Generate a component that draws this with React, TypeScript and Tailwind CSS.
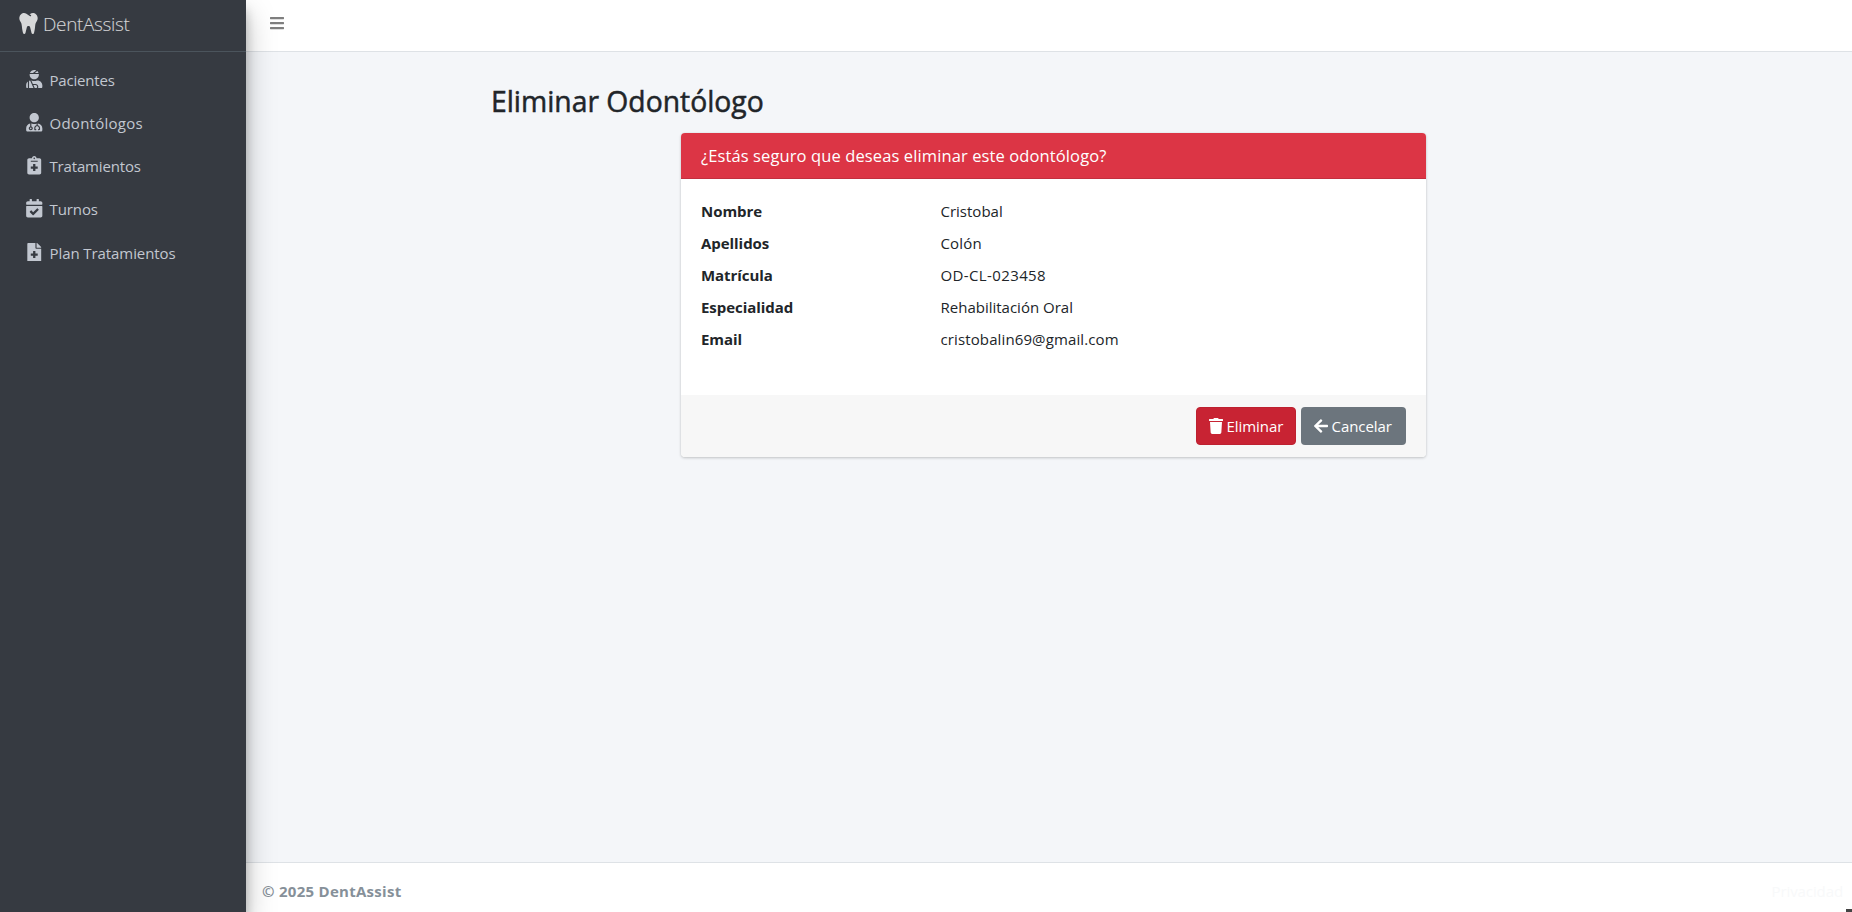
import type { ReactNode } from "react";
import { FaArrowLeft, FaBars, FaCalendarCheck, FaFileMedical, FaNotesMedical, FaTooth, FaTrash, FaUserInjured, FaUserMd } from "react-icons/fa";

const NAV: { icon: ReactNode; label: string; tracking: string }[] = [
  { icon: <FaUserInjured />, label: "Pacientes", tracking: "tracking-[-0.18px]" },
  { icon: <FaUserMd />, label: "Odontólogos", tracking: "tracking-[0.26px]" },
  { icon: <FaNotesMedical />, label: "Tratamientos", tracking: "tracking-[-0.16px]" },
  { icon: <FaCalendarCheck />, label: "Turnos", tracking: "tracking-[-0.1px]" },
  { icon: <FaFileMedical />, label: "Plan Tratamientos", tracking: "tracking-[-0.08px]" },
];

const FIELDS: { name: string; value: string; tracking: string }[] = [
  { name: "Nombre", value: "Cristobal", tracking: "tracking-normal" },
  { name: "Apellidos", value: "Colón", tracking: "tracking-[0.15px]" },
  { name: "Matrícula", value: "OD-CL-023458", tracking: "tracking-[0.38px]" },
  { name: "Especialidad", value: "Rehabilitación Oral", tracking: "tracking-normal" },
  { name: "Email", value: "cristobalin69@gmail.com", tracking: "tracking-[0.12px]" },
];

function Sidebar() {
  return (
    <aside className="z-10 flex w-[246px] shrink-0 flex-col bg-[#363a41] text-[#c2c7d0] shadow-[0_14px_28px_rgba(0,0,0,0.25),0_10px_10px_rgba(0,0,0,0.22)]">
      <div className="flex h-[52px] items-center border-b border-[#4b545c] pb-1 pl-[19px] text-white/80">
        <FaTooth className="h-[21px] w-[19px]" />
        <span className="ml-[5px] pt-[2px] text-[19px] font-light tracking-[-0.35px]">DentAssist</span>
      </div>
      <nav className="flex flex-col pt-[7px]">
        {NAV.map((item) => (
          <a key={item.label} className="flex h-[43.2px] items-center pb-[1px] pl-[23px]">
            <span className="flex w-[22px] justify-center pb-[2px] text-[18.5px]">{item.icon}</span>
            <span className={`ml-[4.5px] text-[15px] ${item.tracking}`}>{item.label}</span>
          </a>
        ))}
      </nav>
    </aside>
  );
}

function ConfirmCard() {
  return (
    <section className="ml-[189px] flex w-[745px] flex-col overflow-hidden rounded bg-white shadow-[0_0_1px_rgba(0,0,0,0.125),0_1px_3px_rgba(0,0,0,0.2)]">
      <header className="flex h-[46px] items-center border-b border-[#c32f3e] bg-[#dc3545] px-5 pt-[2px] text-white">
        <h3 className="text-[16.5px] tracking-[0.11px]">¿Estás seguro que deseas eliminar este odontólogo?</h3>
      </header>
      <dl className="h-[216px] px-5 pt-4">
        {FIELDS.map((f) => (
          <div key={f.name} className="flex h-8 items-center text-[15px]">
            <dt className="w-[239.5px] font-bold tracking-[-0.05px]">{f.name}</dt>
            <dd className={f.tracking}>{f.value}</dd>
          </div>
        ))}
      </dl>
      <footer className="flex h-[62px] items-center justify-end gap-[5px] bg-[#f7f7f7] px-5 text-[15px] tracking-[-0.05px] text-white">
        <button className="flex h-[38px] w-[100px] items-center gap-1 rounded border border-[#bd2130] bg-[#c82333] pl-[11.5px]">
          <FaTrash className="h-4 w-[14px]" />
          <span>Eliminar</span>
        </button>
        <button className="flex h-[38px] w-[105px] items-center gap-1 rounded bg-[#6c757d] pl-[12.5px]">
          <FaArrowLeft className="h-4 w-[14px]" />
          <span>Cancelar</span>
        </button>
      </footer>
    </section>
  );
}

export default function App() {
  return (
    <div className="relative flex h-[912px] w-[1852px] overflow-hidden bg-[#f4f6f9] font-['Open_Sans','Noto_Sans',sans-serif] text-[#212529]">
      <Sidebar />
      <div className="flex flex-1 flex-col">
        <header className="flex h-[52px] items-center border-b border-[#dee2e6] bg-white pb-[5px] pl-6 text-[#7f7f7f]">
          <FaBars className="h-4 w-[14px]" />
        </header>
        <main className="flex-1 pl-[245px] pt-[29px]">
          <h1 className="mb-3 h-10 text-[28.3px] font-medium leading-10 [-webkit-text-stroke:0.5px_#212529]">Eliminar Odontólogo</h1>
          <div className="pl-px">
            <ConfirmCard />
          </div>
        </main>
        <footer className="flex h-[50px] items-center justify-between border-t border-[#dee2e6] bg-white pl-4 pr-[9px] pt-[7px] text-[15px]">
          <strong className="font-bold tracking-[0.28px] text-[#869099]">© 2025 DentAssist</strong>
          <a className="tracking-[-0.1px] text-[#f8f9fa]">Privacidad</a>
        </footer>
      </div>
      <div className="absolute bottom-0 right-0 h-[3px] w-[6px] bg-[#444444]" />
    </div>
  );
}
